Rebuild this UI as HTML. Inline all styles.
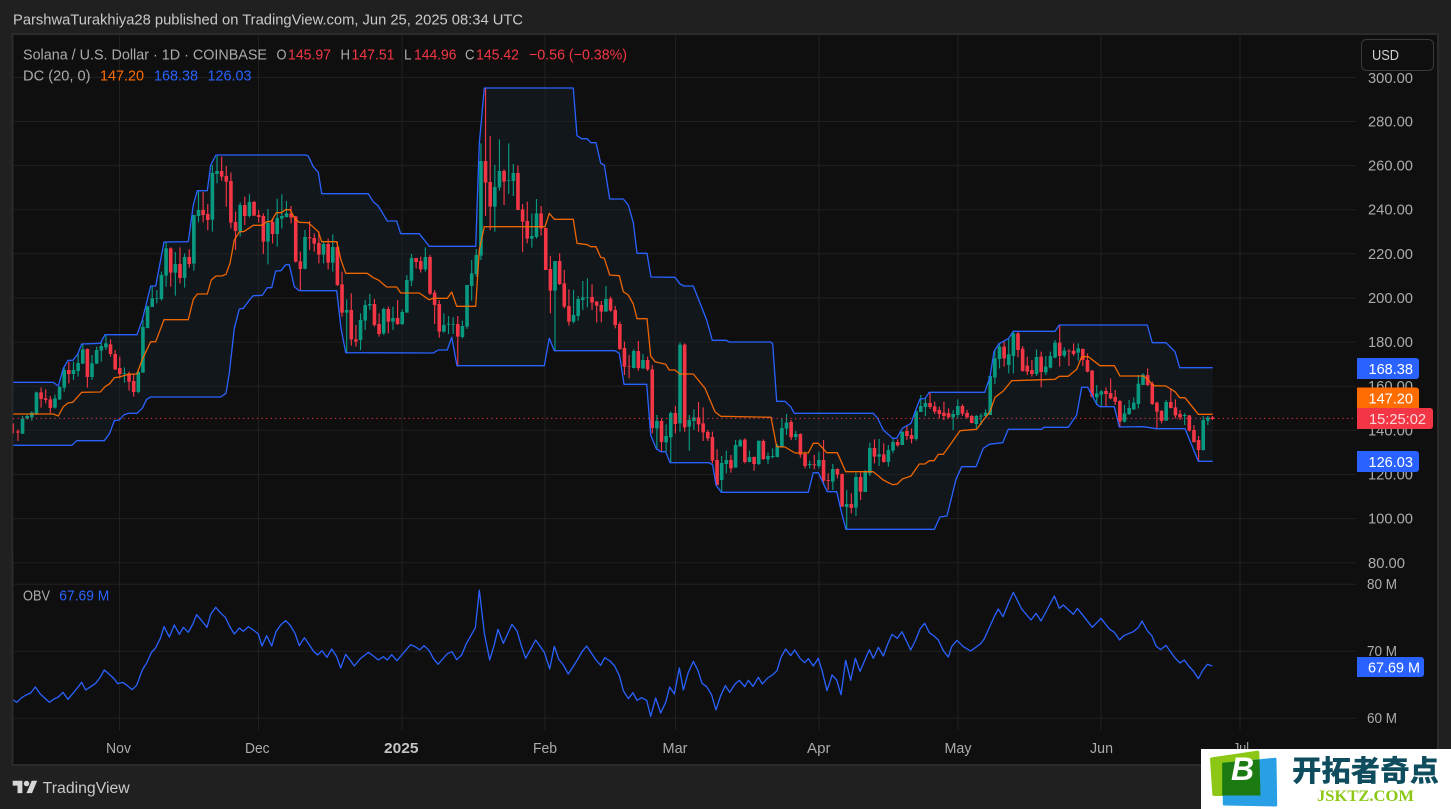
<!DOCTYPE html>
<html lang="en">
<head>
<meta charset="utf-8">
<title>Solana / U.S. Dollar chart</title>
<style>
html,body{margin:0;padding:0;background:#202020;width:1451px;height:809px;overflow:hidden}
svg{display:block}
text{font-family:"Liberation Sans",sans-serif;font-size:15px}
.g{fill:none;stroke:#202020;stroke-width:1}
.gw{stroke:#089981;stroke-width:1.15}
.gb{stroke:#089981;stroke-width:3.6}
.rw{stroke:#f23645;stroke-width:1.15}
.rb{stroke:#f23645;stroke-width:3.6}
.gw,.gb,.rw,.rb,.o{fill:none;vector-effect:non-scaling-stroke}
.o{stroke:#2962ff;stroke-width:1.3;stroke-linejoin:round}
.p{fill:#ababab}
.t{fill:#ababab}
.w{fill:#fff}
.l{fill:#ababab}
.r{fill:#f23645}
</style>
</head>
<body>
<svg width="1451" height="809" viewBox="0 0 1451 809" xmlns="http://www.w3.org/2000/svg">
<defs>
<clipPath id="bc"><rect x="13.3" y="35" width="1199.4" height="520"/></clipPath>
<path id="u" d="M0 382.3L53.3 382.3 58.3 386 63.3 368.3 68 360.3 72.7 360.3 77.3 355 81.7 344 100.3 343.3 105 334.7 137 334.7 142.3 320 150.7 286 155.7 286 164 242 188.3 241.7 193.3 205 197.3 190.7 207.3 190.7 210.7 165 216 155 305.7 155 308.3 156 313.3 166.7 318.3 172.3 321.7 193.7 368.3 193.7 373.3 201.7 378.3 206 387.3 221 396.7 221 400.7 233.7 419.3 233.7 429.3 246.3 475.7 246.3 479.3 143.3 484.3 88 573.3 88 577 135.7 581.7 138.7 587.3 138.7 590.7 142.7 596 142.7 600.7 163.3 604.3 165 609.7 199 623.3 199 628.3 205 633.3 222.7 637 253.3 647 253.3 651 277 675 277.3 680 284 684 286 693.3 286 706.7 320 712.3 340.3 726 340.3 729.3 342 770.7 342 772.7 344 776.7 401.3 785 401.3 790.7 406.7 794.3 413.3 873.3 413.3 877.7 418.3 883.3 430 892.7 438.3 896.7 438.3 902.3 428.3 911 423.3 915.7 410 920 399 925 398.5 929.3 392.3 984.7 392.3 990 376.7 994 351.7 998.7 344 1008.7 338.3 1013.3 331.3 1055 331.3 1059.3 325 1147.3 325 1152.3 342.7 1166 342.7 1175 351.7 1179.7 367.7 1230 367.7 1230 560 0 560Z"/>
<path id="v" d="M0 445.3L72 445.3 76.7 440.7 104.3 440.7 109.7 433.3 114.3 420.7 119.3 420 123.7 415 128.3 413.3 137 413.3 142.3 408.3 146.7 399.3 150.7 397 220.7 397 226 393.3 229.3 373.3 234.3 328.3 239.3 309 243.3 308.3 250 299.3 253.3 295.7 262.3 295.3 267.3 287.7 271.7 287.7 275.7 271 281 270.7 285.7 264.7 289.3 264.7 294.3 286.7 299.3 290.7 336.7 290.7 341 328.3 345.7 352.7 433.3 353 438.3 350 447.3 350 451.7 337.3 457 365.7 544.3 365.7 549.3 338.3 554.3 350.7 615 350.7 619.3 353.3 624 384.3 646.7 384.3 650.7 435 656 448.3 660.7 451.7 665.7 451.7 670 462.7 709.3 462.7 712.7 465 716 485 721.3 492.3 808.3 492.3 813.3 472.7 818.3 472.7 827.3 491.7 836.7 491.7 841.7 513.3 846 529.3 934.3 529.3 940 517 947 516 956 479.3 961.7 466.7 976 466.7 983.3 448.3 989.3 444.3 1002.7 442.7 1008.3 429.3 1041.7 429.3 1044 427.3 1068.3 427.3 1076.7 415 1081.7 387.3 1087.7 387.3 1096.7 404.3 1100 406.7 1114.3 406.7 1119.3 427 1143.3 426.7 1156 428.7 1185 428.7 1198.3 461.3 1230 461.3 1230 560 0 560Z"/>
</defs>

<!-- frame -->
<rect width="1451" height="809" fill="#202020"/>
<rect x="12.5" y="34" width="1425.5" height="731" fill="#0f0f0f" stroke="#2b2b2b" stroke-width="2"/>

<!-- band fill -->
<g clip-path="url(#bc)">
<use href="#u" fill="#12171c"/>
<use href="#v" fill="#0f0f0f"/>
</g>

<!-- grid -->
<path class="g" d="M13 77.5H1356M13 121.5H1356M13 165.6H1356M13 209.7H1356M13 253.8H1356M13 298H1356M13 342.1H1356M13 386.2H1356M13 430.3H1356M13 474.5H1356M13 518.6H1356M13 562.7H1356M13 584.3H1356M13 651.3H1356M13 718.3H1356"/>
<path class="g" d="M119.5 35V730M258.5 35V730M402 35V730M545 35V730M675.5 35V730M819 35V730M958 35V730M1101 35V730M1240 35V730"/>

<!-- candles A -->
<g transform="translate(13.3,140) scale(4.63,.33333)">
<path class="gw" d="M2 828V882M3 824V838M4 814V842M5 755V825M9 764V806M10 738V780M11 682V755M13 665V720M14 640V710M15 610V672M17 645V720M18 620V672M19 605V665M20 585V630M24 682V728M27 690V760M28 540V698M29 497V565M30 440V500M31 450V490M32 395V482M33 305V440M35 336V467M37 340V443M39 225V392M40 152V247M43 75V275M44 48V130M49 187V290M51 163V232M55 207V373M57 176V320M58 163V265M59 183V232M63 270V388M67 305V370M69 283V395M72 478V640M75 520V630"/>
<path class="gb" d="M2 836V881M3 828V836M4 818V832M5 757V823M9 775V803M10 741V778M11 690V743M13 690V702M14 669V693M15 628V671M17 670V711M18 630V671M19 618V632M20 610V622M24 699V701M27 696V756M28 561V698M29 499V564M30 475V501M31 474V476M32 405V477M33 325V407M35 372V398M37 351V414M39 225V371M40 210V228M43 99V239M44 93V102M49 195V275M51 186V228M55 249V305M57 234V282M58 228V236M59 220V231M63 291V386M67 312V344M69 321V368M72 510V518M75 540V600"/>
<path class="rw" d="M0 850V880M1 868V903M6 742V803M7 748V790M8 768V820M12 665V730M16 625V743M21 598V650M22 630V690M23 650V715M25 695V752M26 700V770M34 322V440M36 322V430M38 328V383M41 156V247M42 192V270M45 50V122M46 78V200M47 97V265M48 215V330M50 170V255M52 183V228M53 210V248M54 220V342M56 235V310M60 198V250M61 228V367M62 335V450M64 243V330M65 280V335M66 275V370M68 295V388M70 305V438M71 395V530M73 460V617M74 555V620"/>
<path class="rb" d="M1 874V878M6 757V777M7 775V780M8 778V804M12 690V702M16 627V711M21 613V642M22 642V688M23 684V702M25 700V725M26 723V756M34 325V398M36 372V414M38 351V372M41 210V225M42 222V240M45 93V110M46 108V125M47 123V248M48 246V273M50 195V228M52 186V227M53 225V231M54 228V305M56 246V282M60 220V233M61 229V365M62 364V387M64 292V295M65 294V311M66 309V344M68 312V368M70 321V435M71 433V518M73 510V598M74 598V605"/>
</g>
<!-- candles B -->
<g transform="translate(13.3,80) scale(4.63,.33333)">
<path class="gw" d="M76 660V750M77 642V690M80 683V765M82 680V750M84 688V735M85 585V698M86 522V618M89 502V575M93 700V758M94 708V762M95 712V762M97 722V775M98 615V747M99 540V662M100 507V590M101 190V540M104 255V455M105 178V332M107 190V342M108 252V348M112 400V503M113 357V476M117 543V810M121 630V730M122 648V722M123 603V690M124 595V682M128 618V695"/>
<path class="gb" d="M76 675V722M77 672V676M80 687V760M82 714V725M84 696V732M85 600V698M86 534V602M89 531V568M93 735V755M94 731V734M95 732V734M97 738V771M98 615V740M99 580V618M100 525V582M101 243V527M104 321V380M105 273V322M107 300V302M108 279V303M112 468V476M113 400V471M117 543V632M121 705V725M122 657V708M123 652V660M124 651V653M128 657V695"/>
<path class="rw" d="M78 657V740M79 700V770M81 680V760M83 660V735M87 535V565M88 530V578M90 525V645M91 630V732M92 660V773M96 708V860M102 25V408M103 168V450M106 268V375M109 256V390M110 372V516M111 365V490M114 378V467M115 443V570M116 528V700M118 520V615M119 570V685M120 628V737M125 613V690M126 663V727M127 663V727M129 650V695M130 678V745M131 725V810"/>
<path class="rb" d="M78 672V735M79 732V762M81 687V725M83 714V732M87 534V546M88 543V568M90 531V641M91 638V675M92 672V755M96 732V770M102 243V308M103 306V380M106 273V305M109 279V390M110 388V425M111 423V476M114 400V445M115 444V570M116 567V632M118 543V612M119 610V680M120 678V725M125 651V668M126 665V677M127 675V695M129 656V692M130 690V735M131 732V807"/>
</g>
<!-- candles C -->
<g transform="translate(13.3,330) scale(4.63,.33333)">
<path class="gw" d="M134 58V115M136 72V117M139 255V360M141 283V365M142 245V398M144 37V305M146 255V362M147 238V300M153 378V485M154 362V430M156 330V413M157 327V350M159 362V397M161 335V405M163 368V402M164 355V385M165 342V382M166 265V352M167 252V315M169 303V330M172 392V415M174 365V415M177 402V480M180 480V600M182 428V558M184 420V486M185 338V438M187 327V408M189 345V410M190 325V370M192 305V345M195 240V332"/>
<path class="gb" d="M134 63V114M136 90V115M139 273V295M141 318V337M142 249V322M144 44V280M146 270V290M147 262V273M153 399V450M154 390V402M156 345V413M157 331V349M159 381V396M161 332V402M163 378V388M164 378V381M165 347V381M166 294V352M167 278V296M169 312V321M172 402V405M174 390V408M177 417V455M180 522V531M182 441V533M184 425V486M185 354V430M187 373V380M189 360V396M190 336V362M192 305V345M195 244V327"/>
<path class="rw" d="M132 35V135M133 75V145M135 33V122M137 80V123M138 105V310M140 265V365M143 228V310M145 40V305M148 216V305M149 232V333M150 300V333M151 305V400M152 358V465M155 375V428M158 325V400M160 380V422M162 328V390M168 270V330M170 310V383M171 365V415M173 375V418M175 330V465M176 430V480M178 415V445M179 430V530M181 490V550M183 428V510M186 328V400M188 340V398M191 328V350M193 285V330M194 295V340"/>
<path class="rb" d="M132 54V110M133 108V110M135 63V114M137 90V118M138 118V294M140 273V336M143 249V282M145 44V292M148 262V283M149 280V307M150 306V325M151 321V392M152 390V465M155 390V415M158 329V396M160 381V402M162 333V387M168 276V322M170 312V374M171 372V408M173 403V406M175 390V452M176 450V453M178 417V434M179 432V530M181 522V534M183 441V485M186 354V380M188 373V396M191 336V346M193 303V318M194 315V327"/>
</g>
<!-- candles D -->
<g transform="translate(13.3,310) scale(4.63,.33333)">
<path class="gw" d="M196 255V306M197 265V318M203 300V360M204 268V325M208 315V355M209 310V345M210 298V325M211 198V315M212 118V222M213 100V175M215 85V190M216 65V190M221 118V198M223 138V195M224 125V175M225 90V145M227 112V142M230 100V152M234 225V285M235 240V288M240 285V337M241 270V315M242 262V300M243 195V295M244 190V225M249 270V333M253 310V345M257 318V422M258 318V345"/>
<path class="gb" d="M196 288V306M197 279V291M203 312V322M204 288V315M208 318V342M209 317V320M210 308V318M211 198V315M212 145V202M213 110V147M215 133V165M216 70V138M221 141V192M223 170V187M224 138V173M225 98V143M227 122V137M230 115V128M234 250V262M235 244V254M240 310V335M241 294V312M242 278V298M243 221V282M244 194V225M249 276V332M253 315V318M257 330V420M258 322V332"/>
<path class="rw" d="M198 248V297M199 275V312M200 290V325M201 275V330M202 295V325M205 283V318M206 300V325M207 315V340M214 95V170M217 65V142M218 108V185M219 140V195M220 150V200M222 125V232M226 45V170M228 118V168M229 100V138M231 115V168M232 130V187M233 180V262M236 232V288M237 205V268M238 240V285M239 270V350M245 175V228M246 215V285M247 275V355M248 300V340M250 237V295M251 268V325M252 300V330M254 315V365M255 345V398M256 378V455M259 318V330"/>
<path class="rb" d="M198 279V291M199 289V305M200 300V312M201 308V318M202 309V322M205 288V311M206 309V322M207 318V339M214 110V145M217 70V120M218 116V183M219 167V185M220 180V192M222 140V186M226 98V138M228 122V124M229 122V132M231 117V150M232 150V185M233 182V260M236 243V252M237 249V265M238 261V275M239 273V335M245 195V225M246 221V282M247 278V305M248 303V333M250 276V294M251 292V316M252 312V322M254 316V362M255 360V396M256 390V420M259 322V327"/>
</g>

<!-- band lines -->
<g clip-path="url(#bc)">
<use href="#u" fill="none" stroke="#2962ff" stroke-width="1.3" stroke-linejoin="round"/>
<use href="#v" fill="none" stroke="#2962ff" stroke-width="1.3" stroke-linejoin="round"/>
</g>
<polyline fill="none" stroke="#ff6d00" stroke-width="1.3" stroke-linejoin="round" opacity=".92" points="13.3,414 53.3,414 58.3,416 63.3,406.7 68,403 72.7,402.3 81.7,392.3 100.3,392 105,386.7 109.7,383.7 114.3,377.7 119.3,377 128.3,374.3 137,374 142.3,359.3 150.7,341.7 155.7,341.7 164,319.7 188.3,319.7 193.3,299.3 197.3,294 207.3,294 211.3,280 216,276 221.7,276 226,274.3 230,263.3 234.3,240 239.3,232 244.3,231.3 253.3,225.3 262.3,225.3 266.7,221.7 271.3,221.3 276.3,212.7 281.3,212.7 285.7,209.7 290,209.7 295.3,219.3 299.3,222.3 308.3,222.7 318.3,231.7 321.7,241.7 336.7,241.7 341,260 345.7,273.3 367.3,273.3 373.3,277.7 378.3,280 386.7,287 396.7,287 400.7,293 419.3,293 429,299.7 433.3,298.3 447.3,298.3 451.7,292 456.7,306.3 475.7,306.3 479.3,250 484.3,226.7 545,226.7 549.3,213.3 554.3,219.3 573.3,219.3 577,243.3 587.3,244.7 590.7,246.7 596,246.7 600.7,257.3 604.3,258.3 609.7,275 619.3,275.7 623.3,291.7 628.3,295 633.3,304 637,318.7 647,318.7 650.7,356 655,361.7 665.7,364.3 669.3,370 675,370 680,374 693.3,374 705,388.3 715,411.7 720.7,416.3 771,417.3 776.7,446.7 785,447 795,453 808.3,453 813.3,443.3 818.3,443.3 826.7,452.7 837.3,452.7 845.7,471.7 873.3,471.7 883.3,480 892.7,484.7 897.3,484 902.3,479 911,476 919.3,464 925,464 929.3,460.7 934,460.7 938.3,454.3 943.3,454.3 950,445 960,430.7 976.7,429.3 984.7,418.3 990,411.7 995,397.3 1003.3,391 1011.7,380.7 1055,379.3 1059.3,376.3 1068.3,376.3 1076.7,369.3 1081.7,356.7 1088.3,356.7 1100,365.7 1114.3,365.7 1120,376 1143.3,376 1147.7,379.3 1153.3,385.7 1166,386 1175,391.7 1179.7,397.7 1185,397.7 1198.3,414.3 1212.7,414.3"/>

<!-- last price line -->
<path d="M13 418.4H1356" stroke="#f23645" stroke-width="1" stroke-dasharray="1.2 3.4" fill="none"/>

<!-- OBV -->
<g transform="translate(0,575) scale(.33333)"><polyline class="o" points="40,375 50,382 65,368 78,360 92,354 106,336 120,356 134,369 148,382 162,372 175,366 189,352 204,373 218,356 232,339 245,322 257,345 272,335 287,325 300,308 313,285 328,298 343,312 353,326 368,322 381,331 396,344 410,331 427,285 441,262 454,233 467,218 481,190 492,155 508,186 523,150 538,178 550,157 565,172 578,148 590,119 605,137 621,157 632,118 647,97 661,113 676,127 690,156 703,177 718,159 730,169 745,155 760,165 775,177 786,213 800,182 815,213 828,170 842,150 857,137 870,150 885,175 898,212 913,188 927,208 940,228 953,240 966,227 981,247 995,222 1010,245 1022,279 1037,238 1050,255 1063,273 1080,252 1105,232 1120,243 1135,255 1150,245 1162,255 1175,239 1191,257 1205,240 1232,209 1247,216 1260,225"/></g>
<g transform="translate(420,575) scale(.33333)"><polyline class="o" points="0,224 12,212 27,226 40,250 54,268 68,252 82,236 96,230 110,254 125,240 138,208 166,158 178,46 193,175 209,255 222,212 234,163 250,205 276,148 291,168 305,215 317,250 347,195 373,232 389,282 403,214 416,252 430,270 445,297 472,255 486,230 500,213 528,255 542,271 554,248 570,258 584,273 598,302 610,347 625,371 639,353 651,376 665,368 680,376 692,424 707,369 722,414 737,382 749,336 763,357 778,279 790,345 805,292 820,259 834,287 846,325 860,335 875,360 888,405 902,362 916,332 929,352 945,327 958,316 974,335 985,316 999,334 1015,307 1027,327 1043,309 1057,300 1071,287 1083,247 1097,222 1112,242 1124,225 1140,250 1154,263 1165,251 1180,273 1195,250 1207,290 1221,347 1230,320"/></g>
<g transform="translate(830,575) scale(.33333)"><polyline class="o" points="0,320 6,300 20,315 33,359 47,256 62,316 76,250 90,289 118,224 130,250 145,217 160,243 172,210 186,178 202,190 216,170 242,225 257,195 270,162 284,145 298,173 312,183 325,195 340,227 355,246 365,215 381,196 400,215 422,228 440,215 453,205 463,191 495,120 505,102 519,125 535,85 550,52 575,102 603,135 618,115 633,138 673,63 688,100 700,90 730,118 742,100 762,125 787,157 813,130 838,162 853,172 869,195 881,182 895,176 910,170 925,158 936,138 952,167 966,183 978,213 992,224 1008,211 1036,250 1050,264 1063,255 1076,273 1090,288 1105,311 1117,288 1132,268 1147,273"/></g>

<!-- header -->
<text x="13" y="24.5" fill="#c9c9c9" textLength="510" lengthAdjust="spacingAndGlyphs">ParshwaTurakhiya28 published on TradingView.com, Jun 25, 2025 08:34 UTC</text>

<!-- legend -->
<text class="l" x="23" y="59.5" textLength="244" lengthAdjust="spacingAndGlyphs">Solana / U.S. Dollar · 1D · COINBASE</text>
<text class="l" x="276.5" y="59.5" textLength="10" lengthAdjust="spacingAndGlyphs">O</text><text class="r" x="288" y="59.5" textLength="43" lengthAdjust="spacingAndGlyphs">145.97</text>
<text class="l" x="340.5" y="59.5" textLength="9.5" lengthAdjust="spacingAndGlyphs">H</text><text class="r" x="351.5" y="59.5" textLength="43" lengthAdjust="spacingAndGlyphs">147.51</text>
<text class="l" x="404" y="59.5" textLength="7.5" lengthAdjust="spacingAndGlyphs">L</text><text class="r" x="414" y="59.5" textLength="42.5" lengthAdjust="spacingAndGlyphs">144.96</text>
<text class="l" x="465" y="59.5" textLength="9.5" lengthAdjust="spacingAndGlyphs">C</text><text class="r" x="476" y="59.5" textLength="43" lengthAdjust="spacingAndGlyphs">145.42</text>
<text class="r" x="529" y="59.5" textLength="98" lengthAdjust="spacingAndGlyphs">−0.56 (−0.38%)</text>
<text class="l" x="23" y="80.5" textLength="67.5" lengthAdjust="spacingAndGlyphs">DC (20, 0)</text>
<text x="100" y="80.5" fill="#ff6d00" textLength="44" lengthAdjust="spacingAndGlyphs">147.20</text>
<text x="154" y="80.5" fill="#2962ff" textLength="44" lengthAdjust="spacingAndGlyphs">168.38</text>
<text x="207.5" y="80.5" fill="#2962ff" textLength="44" lengthAdjust="spacingAndGlyphs">126.03</text>
<text class="l" x="23" y="600.5" textLength="27" lengthAdjust="spacingAndGlyphs">OBV</text>
<text x="59.3" y="600.5" fill="#2962ff" textLength="50" lengthAdjust="spacingAndGlyphs">67.69 M</text>

<!-- price axis -->
<g class="p">
<text x="1368" y="83" textLength="45" lengthAdjust="spacingAndGlyphs">300.00</text>
<text x="1368" y="126.5" textLength="45" lengthAdjust="spacingAndGlyphs">280.00</text>
<text x="1368" y="170.5" textLength="45" lengthAdjust="spacingAndGlyphs">260.00</text>
<text x="1368" y="214.7" textLength="45" lengthAdjust="spacingAndGlyphs">240.00</text>
<text x="1368" y="258.8" textLength="45" lengthAdjust="spacingAndGlyphs">220.00</text>
<text x="1368" y="303" textLength="45" lengthAdjust="spacingAndGlyphs">200.00</text>
<text x="1368" y="347" textLength="45" lengthAdjust="spacingAndGlyphs">180.00</text>
<text x="1368" y="391.2" textLength="45" lengthAdjust="spacingAndGlyphs">160.00</text>
<text x="1368" y="435.3" textLength="45" lengthAdjust="spacingAndGlyphs">140.00</text>
<text x="1368" y="479.5" textLength="45" lengthAdjust="spacingAndGlyphs">120.00</text>
<text x="1368" y="523.6" textLength="45" lengthAdjust="spacingAndGlyphs">100.00</text>
<text x="1368" y="568" textLength="37" lengthAdjust="spacingAndGlyphs">80.00</text>
<text x="1367" y="589" textLength="30" lengthAdjust="spacingAndGlyphs">80 M</text>
<text x="1367" y="656" textLength="30" lengthAdjust="spacingAndGlyphs">70 M</text>
<text x="1367" y="723" textLength="30" lengthAdjust="spacingAndGlyphs">60 M</text>
</g>

<!-- USD -->
<rect x="1361.5" y="39.5" width="72" height="31" rx="5" fill="#0f0f0f" stroke="#3a3a3a"/>
<text x="1372" y="60" fill="#d0d0d0" textLength="27" lengthAdjust="spacingAndGlyphs">USD</text>

<!-- price tags -->
<path d="M1357 358H1416a3 3 0 0 1 3 3V376a3 3 0 0 1-3 3H1357Z" fill="#2962ff"/>
<text class="w" x="1368.5" y="374" textLength="44.5" lengthAdjust="spacingAndGlyphs">168.38</text>
<path d="M1357 387.5H1416a3 3 0 0 1 3 3V408H1357Z" fill="#ff6d00"/>
<text class="w" x="1368.5" y="403.5" textLength="44.5" lengthAdjust="spacingAndGlyphs">147.20</text>
<path d="M1357 408H1430a3 3 0 0 1 3 3V426a3 3 0 0 1-3 3H1357Z" fill="#f23645"/>
<text x="1369" y="424" fill="#ffd9dc" textLength="57" lengthAdjust="spacingAndGlyphs">15:25:02</text>
<path d="M1357 451H1416a3 3 0 0 1 3 3V469a3 3 0 0 1-3 3H1357Z" fill="#2962ff"/>
<text class="w" x="1368.5" y="467" textLength="44.5" lengthAdjust="spacingAndGlyphs">126.03</text>
<path d="M1357 657H1421a3 3 0 0 1 3 3V674a3 3 0 0 1-3 3H1357Z" fill="#2962ff"/>
<text class="w" x="1368" y="672.5" textLength="52" lengthAdjust="spacingAndGlyphs">67.69 M</text>

<!-- time axis -->
<g class="t">
<text x="106" y="753" textLength="25" lengthAdjust="spacingAndGlyphs">Nov</text>
<text x="245" y="753" textLength="24.5" lengthAdjust="spacingAndGlyphs">Dec</text>
<text x="384" y="753" fill="#c4c4c4" textLength="34.5" lengthAdjust="spacingAndGlyphs" style="font-weight:bold">2025</text>
<text x="533" y="753" textLength="24" lengthAdjust="spacingAndGlyphs">Feb</text>
<text x="662.5" y="753" textLength="25" lengthAdjust="spacingAndGlyphs">Mar</text>
<text x="807" y="753" textLength="23.5" lengthAdjust="spacingAndGlyphs">Apr</text>
<text x="944.5" y="753" textLength="27" lengthAdjust="spacingAndGlyphs">May</text>
<text x="1090" y="753" textLength="23" lengthAdjust="spacingAndGlyphs">Jun</text>
<text x="1233" y="753" textLength="16" lengthAdjust="spacingAndGlyphs">Jul</text>
</g>

<!-- TradingView logo -->
<g transform="translate(12.7,778) scale(.69)" fill="#d6d6d6">
<path d="M14 22H7V11H0V4h14v18zM28 22h-8l7.5-18h8L28 22z"/><circle cx="20" cy="8" r="4"/>
</g>
<text x="42.7" y="793" fill="#c8c8c8" style="font-size:15.5px" textLength="87" lengthAdjust="spacingAndGlyphs">TradingView</text>

<!-- watermark -->
<rect x="1201" y="749" width="250" height="60" fill="#fff"/>
<path d="M1212 759.3L1257.3 752.7 1259 794 1214.3 794Z" fill="#8cc716" stroke="#8cc716" stroke-width="4" stroke-linejoin="round"/>
<path d="M1224 764.3L1275 759.3 1275.7 805 1224.3 804Z" fill="#29a0e6" stroke="#29a0e6" stroke-width="3" stroke-linejoin="round"/>
<path d="M1222.7 763.3L1259 760 1260 795 1222.7 795Z" fill="#1b7a12" stroke="#1b7a12" stroke-width="1" stroke-linejoin="round"/>
<text x="1231" y="780" fill="#fff" style="font-size:32px;font-weight:bold;font-style:italic">B</text>
<text x="1292" y="781" fill="#0f4d5e" style="font-family:'Liberation Sans','Noto Sans CJK SC',sans-serif;font-size:29px;font-weight:900" textLength="147" lengthAdjust="spacingAndGlyphs">开拓者奇点</text>
<text x="1317" y="801" fill="#8cc716" style="font-family:'Liberation Serif',serif;font-size:16px;font-weight:bold" textLength="97" lengthAdjust="spacingAndGlyphs">JSKTZ.COM</text>
</svg>
</body>
</html>
